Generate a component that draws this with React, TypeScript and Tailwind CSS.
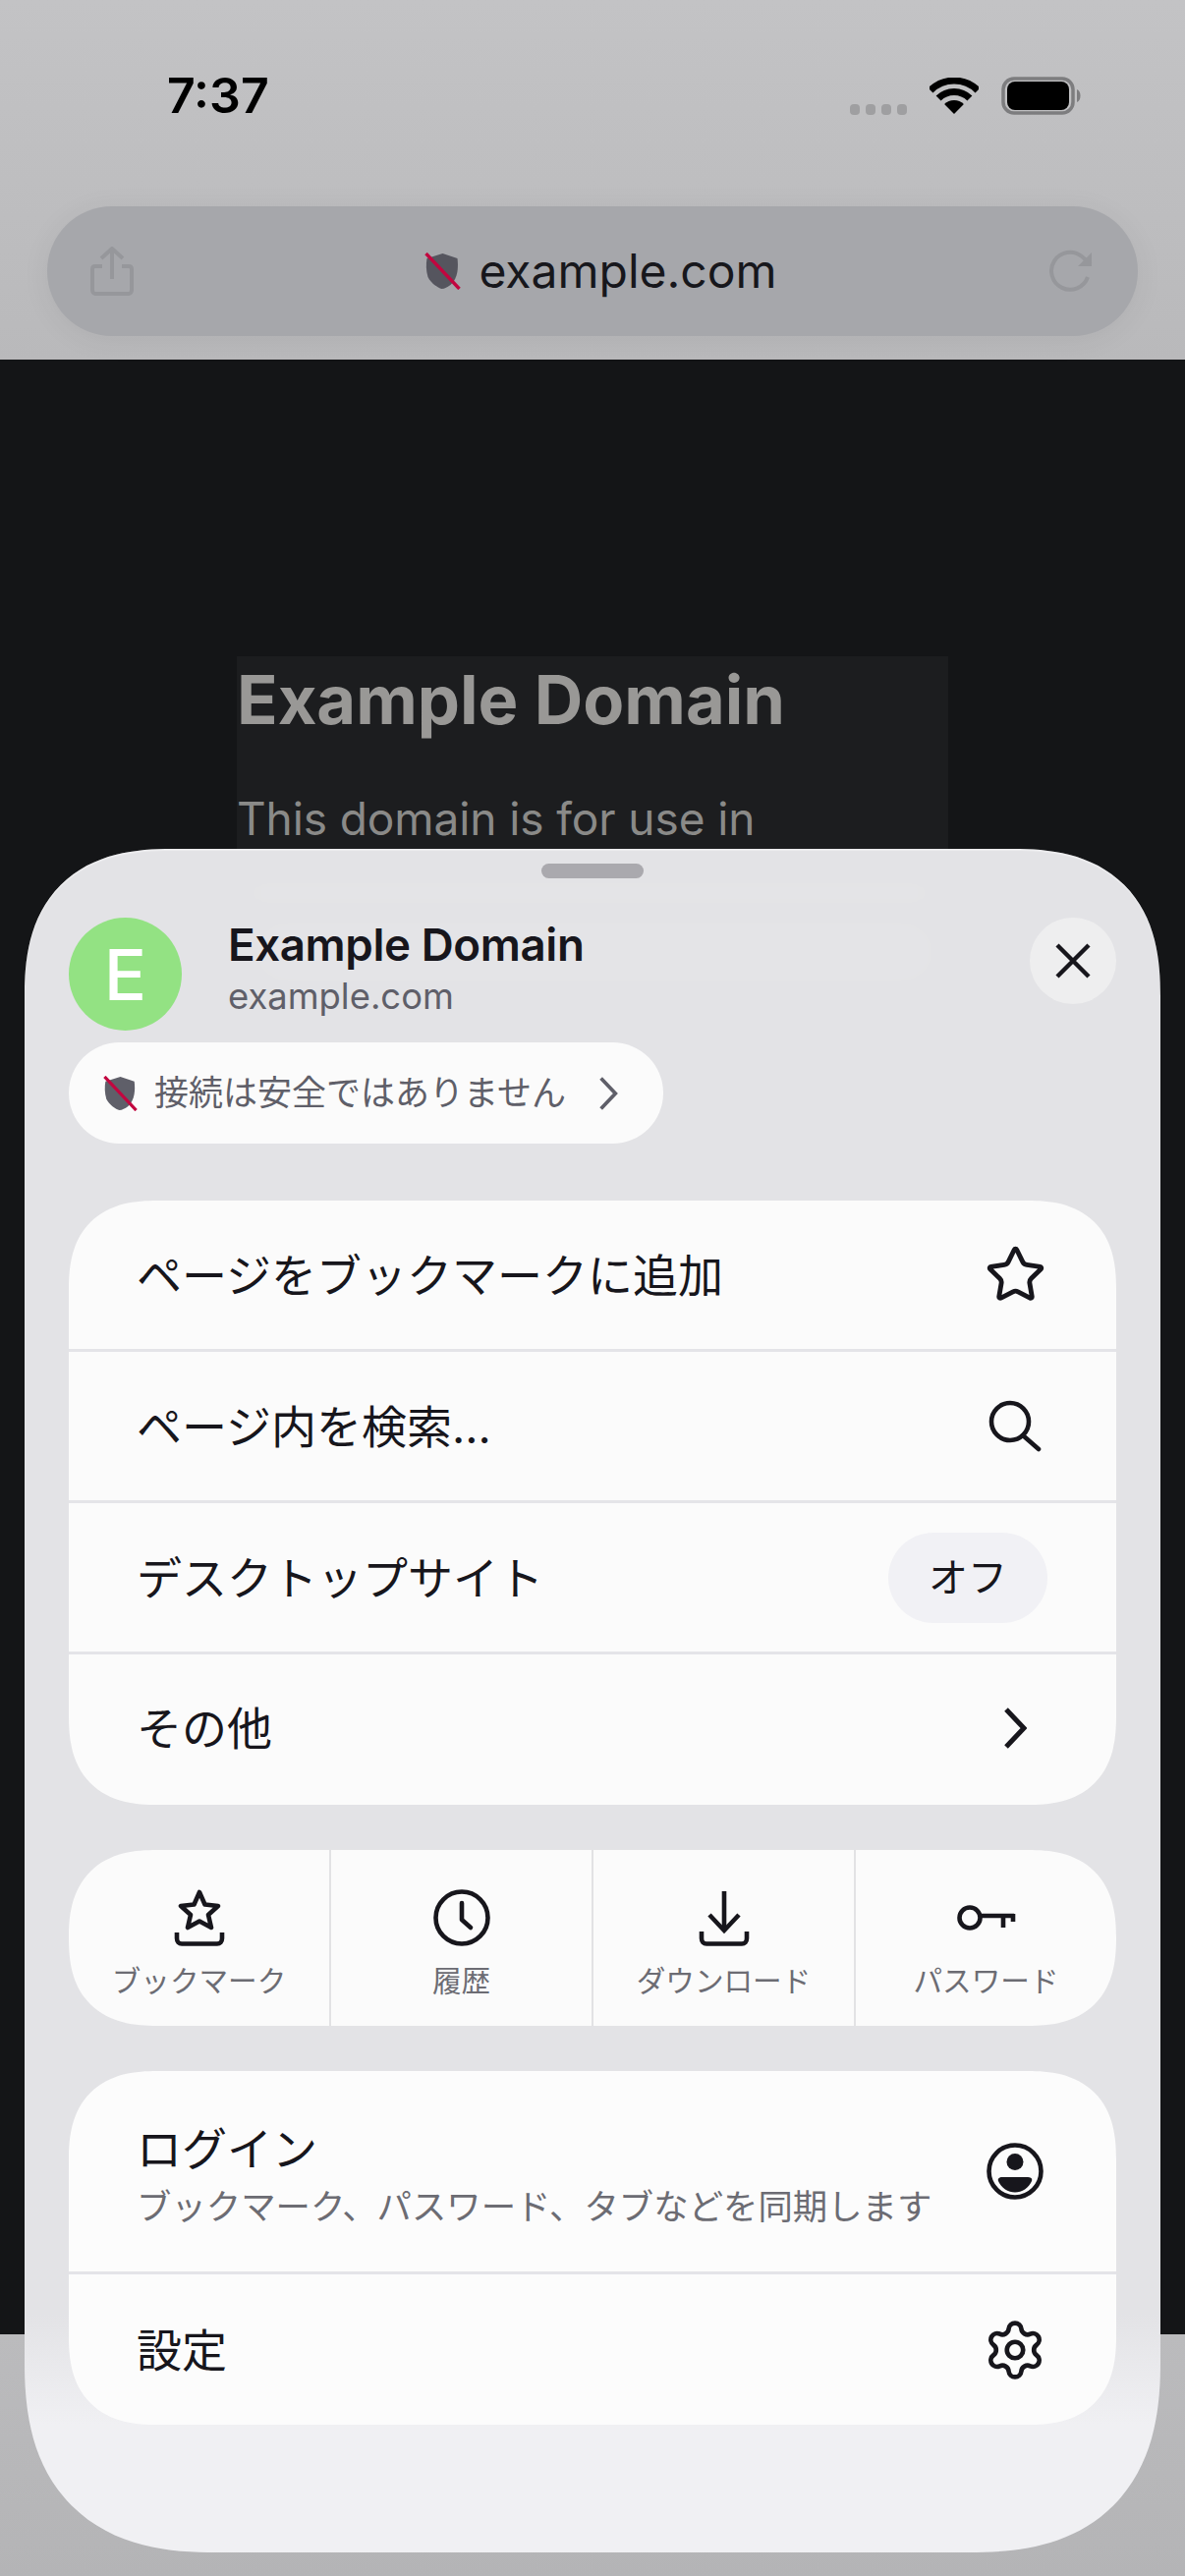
import type { ReactNode } from 'react'
import { Settings, Star } from 'lucide-react'

function ShieldOff({ className, fill }: { className: string; fill: string }) {
  return (
    <svg viewBox="0 0 36 38" className={className}>
      <path d="M18 1 L33 6 C34 14 34 26 26 33 C23 35 20 37 17 37 C13 36 6 31 3 25 C1 18 1 12 2 6 Z" fill={fill} />
      <path d="M1 1 L35 37" stroke="#c2063f" strokeWidth="3.4" />
    </svg>
  )
}

function Chevron({ className, width = 5 }: { className: string; width?: number }) {
  return (
    <svg viewBox="0 0 24 44" className={className} fill="none" stroke="currentColor" strokeWidth={width}>
      <path d="M3 3 L21 22 L3 41" />
    </svg>
  )
}

function SearchIcon() {
  return (
    <svg viewBox="0 0 54 54" className="w-[54px] h-[54px]" fill="none" stroke="#17161c" strokeWidth="4.6">
      <circle cx="22" cy="22" r="19" />
      <path d="M35 36 L51 50" strokeLinecap="round" />
    </svg>
  )
}

function BookmarkTray() {
  return (
    <svg viewBox="0 0 52 58" className="w-[52px] h-[58px]" fill="none" stroke="#17161c" strokeWidth="4.6" strokeLinejoin="round">
      <path d="M26 3 L31.5 15.5 L45 17 L35 26 L38 39 L26 32.5 L14 39 L17 26 L7 17 L20.5 15.5 Z" />
      <path d="M3 44 V50 C3 53 5 55.5 8 55.5 H44 C47 55.5 49 53 49 50 V44" />
    </svg>
  )
}

function ClockIcon() {
  return (
    <svg viewBox="0 0 58 58" className="w-[58px] h-[58px]" fill="none" stroke="#17161c" strokeWidth="4.6">
      <circle cx="29" cy="29" r="26.5" />
      <path d="M29 14 V31 L38 39" strokeLinecap="round" strokeLinejoin="round" />
    </svg>
  )
}

function DownloadIcon() {
  return (
    <svg viewBox="0 0 52 56" className="w-[52px] h-[56px]" fill="none" stroke="#17161c" strokeWidth="4.6">
      <path d="M26 0 V39" />
      <path d="M11 24 L26 40 L41 24" />
      <path d="M3 41 V48 C3 51 5 53.5 8 53.5 H44 C47 53.5 49 51 49 48 V41" />
    </svg>
  )
}

function KeyIcon() {
  return (
    <svg viewBox="0 0 60 30" className="w-[60px] h-[30px] mb-[14px]" fill="none" stroke="#17161c" strokeWidth="4.6">
      <circle cx="13" cy="15" r="10.5" />
      <path d="M24 13 H58" />
      <path d="M47 13 V25" />
      <path d="M57 11 V19" />
    </svg>
  )
}

function ProfileIcon() {
  return (
    <svg viewBox="0 0 58 58" className="w-[58px] h-[58px]" fill="none">
      <circle cx="29" cy="29" r="26.5" stroke="#17161c" strokeWidth="4.6" />
      <circle cx="29" cy="19.5" r="8.5" fill="#17161c" />
      <path d="M16 35 H42 C45 35 47 36.5 46 39 C43 46 36 50.5 29 50.5 C22 50.5 15 46 12 39 C11 36.5 13 35 16 35 Z" fill="#17161c" />
    </svg>
  )
}

function Row({ label, right, border = true }: { label: ReactNode; right: ReactNode; border?: boolean }) {
  return (
    <div className={`flex items-center justify-between pl-[69px] pr-[68px] ${border ? 'h-[154px] border-b-[3px] border-[#e4e4e8]' : 'h-[153px] pb-[3px]'}`}>
      <div className="text-[46px] leading-none text-[#17161c]">{label}</div>
      {right}
    </div>
  )
}

function IconSlot({ children }: { children: ReactNode }) {
  return <div className="w-[70px] flex justify-center">{children}</div>
}

function Shortcut({ icon, label, last }: { icon: ReactNode; label: string; last?: boolean }) {
  return (
    <div className={`flex-1 flex flex-col items-center ${last ? '' : 'border-r-2 border-[#e2e2e4]'}`}>
      <div className="h-[98px] flex items-end">{icon}</div>
      <div className="mt-[21px] text-[29.6px] leading-none text-[#6c6c73]">{label}</div>
    </div>
  )
}

export default function App() {
  return (
    <div className="relative w-[1206px] h-[2622px] overflow-hidden bg-[#141517] font-['Inter','Noto_Sans_CJK_JP',sans-serif]">
      {/* browser chrome */}
      <header className="h-[366px] bg-linear-to-b from-[#c3c3c5] to-[#b9b9bb] px-[48px] pt-[76px]">
        <div className="h-[42px] flex items-center justify-between pl-[122px] pr-[58px]">
          <span className="text-[50px] leading-none font-semibold text-black">7:37</span>
          <div className="flex items-center">
            <div className="flex gap-[6px] mt-[28px]">
              <span className="w-[10px] h-[11px] rounded-[4px] bg-[#9f9fa1]" />
              <span className="w-[10px] h-[11px] rounded-[4px] bg-[#9f9fa1]" />
              <span className="w-[10px] h-[11px] rounded-[4px] bg-[#9f9fa1]" />
              <span className="w-[10px] h-[11px] rounded-[4px] bg-[#9f9fa1]" />
            </div>
            <svg viewBox="0 0 50 37" className="ml-[23px] w-[50px] h-[37px]" fill="none">
              <path d="M1 13 A34 34 0 0 1 49 13" stroke="#000" strokeWidth="7" />
              <path d="M9.1 21.1 A22.5 22.5 0 0 1 40.9 21.1" stroke="#000" strokeWidth="7" />
              <path d="M25 37 L15.1 27.1 A14 14 0 0 1 34.9 27.1 Z" fill="#000" />
            </svg>
            <svg viewBox="0 0 81 39" className="ml-[23px] w-[81px] h-[39px]">
              <rect x="2" y="2" width="71" height="35" rx="11" fill="none" stroke="#7d7d7f" strokeWidth="3.5" />
              <rect x="6" y="5" width="63" height="29" rx="8" fill="#000" />
              <path d="M77 13 C79.5 14 80.5 16.5 80.5 19.5 C80.5 22.5 79.5 25 77 26 Z" fill="#7d7d7f" />
            </svg>
          </div>
        </div>
        <div className="mt-[92px] h-[132px] w-[1110px] rounded-full bg-[#a6a7ab] shadow-[0_4px_30px_rgba(0,0,0,0.06)] flex items-center justify-between pl-[44px] pr-[45px]">
          <svg viewBox="0 0 44 50" className="w-[44px] h-[50px]" fill="none" stroke="#96979b" strokeWidth="4">
            <path d="M22 33 V3 M11 12 L22 2 L33 12" />
            <path d="M12 20 H5 C3 20 2 21 2 23 V44 C2 46 3 48 5 48 H39 C41 48 42 46 42 44 V23 C42 21 41 20 39 20 H32" />
          </svg>
          <div className="ml-[20px] flex items-center gap-[18px]">
            <ShieldOff className="w-[37px] h-[38px]" fill="#55555e" />
            <span className="text-[48px] leading-none text-[#17171c]">example.com</span>
          </div>
          <svg viewBox="0 0 46 44" className="w-[46px] h-[44px]" fill="none" stroke="#96979b" strokeWidth="4">
            <path d="M40 28 A19 19 0 1 1 34 7 L43 15" />
            <path d="M44 3 V17 H30" fill="#96979b" stroke="none" />
          </svg>
        </div>
      </header>

      {/* page underneath the sheet */}
      <main className="h-[2010px] pt-[305px] pl-[241px]">
        <div className="-mt-[3px] pt-[3px] w-[724px] h-[340px] bg-[#1c1d1f]">
          <h1 className="text-[68.6px] leading-[84px] font-bold text-[#999896]">Example Domain</h1>
          <p className="mt-[43px] text-[46px] leading-[70px] tracking-[-0.1px] text-[#8a8a88]">This domain is for use in</p>
        </div>
      </main>
      <div className="h-[246px] bg-linear-to-b from-[#bbbbbd] to-[#b4b4b6]" />

      {/* menu sheet */}
      <section className="absolute left-[25px] top-[864px] w-[1156px] h-[1734px] rounded-t-[150px] rounded-b-[195px] [corner-shape:superellipse(1.3)] bg-[linear-gradient(to_bottom,#e3e3e6_0%,#e3e3e6_86%,#f0f0f3_92.5%,#f0f0f3_100%)] shadow-[inset_0_2px_1px_rgba(255,255,255,0.35)] px-[45px] pt-[15px]">
        <div className="absolute left-[220px] top-[30px] w-[710px] h-[30px] rounded-full bg-white/5 blur-md" />
        <div className="absolute left-[230px] top-[70px] w-[700px] h-[70px] rounded-full bg-white/5 blur-md" />

        <div className="relative">
          <div className="mx-auto w-[104px] h-[15px] rounded-full bg-[#aaa9ae]" />

          <div className="mt-[40px] flex justify-between">
            <div className="flex">
              <div className="w-[115px] h-[115px] rounded-full bg-[#93e283] flex items-center justify-center text-[72px] leading-none font-medium text-white">E</div>
              <div className="ml-[47px]">
                <div className="text-[45.7px] leading-[56px] font-semibold tracking-[-0.4px] text-[#17161c]">Example Domain</div>
                <div className="mt-[2px] text-[36.4px] leading-[44px] text-[#5f5f69]">example.com</div>
              </div>
            </div>
            <div className="w-[88px] h-[88px] rounded-full bg-[#eeeeef] flex items-center justify-center">
              <svg viewBox="0 0 36 36" className="w-[36px] h-[36px]" fill="none" stroke="#17161c" strokeWidth="4.4">
                <path d="M2 2 L34 34 M34 2 L2 34" />
              </svg>
            </div>
          </div>

          <div className="mt-[12px] w-[605px] h-[103px] rounded-full bg-[#fbfbfb] flex items-center pl-[35px] text-[#5f5f69]">
            <ShieldOff className="w-[35px] h-[36px]" fill="#5f5f69" />
            <span className="ml-[17px] text-[35px] leading-none">接続は安全ではありません</span>
            <Chevron className="ml-[33px] w-[20px] h-[36px]" width={4.5} />
          </div>

          <div className="mt-[58px] rounded-[90px] [corner-shape:superellipse(1.3)] bg-[#fbfbfb] overflow-hidden">
            <Row label="ページをブックマークに追加" right={<IconSlot><Star size={63} strokeWidth={1.85} color="#17161c" /></IconSlot>} />
            <Row label="ページ内を検索..." right={<IconSlot><SearchIcon /></IconSlot>} />
            <Row
              label="デスクトップサイト"
              right={<div className="mr-[2px] w-[162px] h-[92px] rounded-full bg-[#f1f1f5] flex items-center justify-center text-[40px] leading-none text-[#17161c]">オフ</div>}
            />
            <Row label="その他" border={false} right={<IconSlot><Chevron className="w-[24px] h-[44px] text-[#17161c]" /></IconSlot>} />
          </div>

          <div className="mt-[46px] h-[179px] rounded-[90px] [corner-shape:superellipse(1.3)] bg-[#fbfbfb] flex overflow-hidden">
            <Shortcut icon={<BookmarkTray />} label="ブックマーク" />
            <Shortcut icon={<ClockIcon />} label="履歴" />
            <Shortcut icon={<DownloadIcon />} label="ダウンロード" />
            <Shortcut icon={<KeyIcon />} label="パスワード" last />
          </div>

          <div className="mt-[46px] rounded-[90px] [corner-shape:superellipse(1.3)] bg-[#fcfcfc] overflow-hidden">
            <div className="h-[207px] border-b-[3px] border-[#e4e4e8] flex items-center justify-between pl-[69px] pr-[68px]">
              <div className="pt-[8px]">
                <div className="text-[46px] leading-none text-[#17161c]">ログイン</div>
                <div className="mt-[19px] text-[35.4px] leading-none text-[#6c6c73]">ブックマーク、パスワード、タブなどを同期します</div>
              </div>
              <IconSlot><ProfileIcon /></IconSlot>
            </div>
            <div className="h-[153px] flex items-center justify-between pl-[69px] pr-[68px]">
              <div className="text-[46px] leading-none text-[#17161c]">設定</div>
              <IconSlot><Settings size={66} strokeWidth={1.7} color="#17161c" /></IconSlot>
            </div>
          </div>
        </div>
      </section>
    </div>
  )
}
